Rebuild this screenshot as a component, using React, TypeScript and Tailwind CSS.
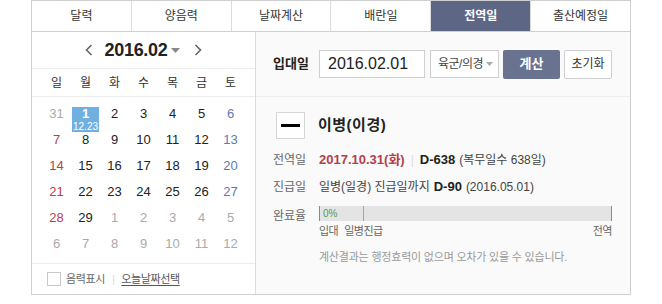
import React from 'react';

const FONT = { fontFamily: '"Liberation Sans", "Noto Sans CJK KR", sans-serif' };

const tabs = ['달력', '양음력', '날짜계산', '배란일', '전역일', '출산예정일'];
const weekdays = ['일', '월', '화', '수', '목', '금', '토'];

type Day = { d: number; muted?: boolean };

const days: Day[] = [
  { d: 31, muted: true },
  ...Array.from({ length: 29 }, (_, i) => ({ d: i + 1 })),
  ...Array.from({ length: 12 }, (_, i) => ({ d: i + 1, muted: true })),
];

function dayColor(i: number, muted?: boolean) {
  if (muted) return 'text-[#aaaaaa]';
  if (i % 7 === 0) return 'text-[#b8404e]';
  if (i % 7 === 6) return 'text-[#5b7bb0]';
  return 'text-[#222222]';
}

function Calendar() {
  return (
    <div className="w-[224px] flex flex-col border-r border-[#dcdcdc] bg-white">
      <div className="h-[37px] flex items-center justify-center border-b border-[#ececec]">
        <svg width="8" height="12" viewBox="0 0 8 12" className="mr-[12px]">
          <path d="M6.5 1 L1.5 6 L6.5 11" stroke="#666" strokeWidth="1.6" fill="none" />
        </svg>
        <span className="text-[18px] font-bold text-[#222] tracking-[-0.3px]">2016.02</span>
        <svg width="9" height="5" viewBox="0 0 9 5" className="ml-[4px] mr-[14px]">
          <path d="M0 0 L9 0 L4.5 5 Z" fill="#888" />
        </svg>
        <svg width="8" height="12" viewBox="0 0 8 12">
          <path d="M1.5 1 L6.5 6 L1.5 11" stroke="#666" strokeWidth="1.6" fill="none" />
        </svg>
      </div>
      <div className="h-[28px] grid grid-cols-7 px-[10px] items-center border-b border-[#ececec] text-[12px] text-[#333]">
        {weekdays.map((w) => (
          <span key={w} className="text-center">{w}</span>
        ))}
      </div>
      <div className="flex-1 grid grid-cols-7 auto-rows-[26px] px-[10px] pt-[10px]">
        {days.map((day, i) =>
          i === 1 ? (
            <div key={i} className="flex justify-center">
              <div className="w-[27px] h-[25px] bg-[#6fb0e0] flex flex-col items-center text-white">
                <span className="text-[13px] leading-[13px] font-bold">1</span>
                <span className="text-[10px] leading-[11px] mt-[1px]">12.23</span>
              </div>
            </div>
          ) : (
            <div key={i} className={`text-center text-[13px] leading-[13px] ${dayColor(i, day.muted)}`}>
              {day.d}
            </div>
          )
        )}
      </div>
      <div className="h-[31px] border-t border-[#ececec] flex items-center pl-[15px] text-[11px] tracking-[-0.4px]">
        <span className="w-[14px] h-[14px] border border-[#c8c8c8] bg-white" />
        <span className="ml-[5px] text-[#666]">음력표시</span>
        <span className="mx-[7px] text-[#dddddd]">|</span>
        <span className="text-[#555] underline underline-offset-2">오늘날짜선택</span>
      </div>
    </div>
  );
}

function Result() {
  return (
    <div className="flex-1 bg-[#fafafa] flex flex-col">
      <div className="h-[65px] flex items-center pl-[17px] border-b border-[#eeeeee]">
        <span className="text-[13px] font-bold text-[#222] w-[46px]">입대일</span>
        <div className="w-[106px] h-[28px] border border-[#cfcfcf] bg-white flex items-center pl-[8px] text-[16px] text-[#222]">
          2016.02.01
        </div>
        <div className="ml-[5px] w-[69px] h-[28px] border border-[#cfcfcf] bg-white flex items-center pl-[7px] text-[12px] text-[#444] tracking-[-0.5px]">
          육군/의경
          <svg width="7" height="4" viewBox="0 0 7 4" className="ml-[3px]">
            <path d="M0 0 L7 0 L3.5 4 Z" fill="#aaa" />
          </svg>
        </div>
        <button className="ml-[4px] w-[57px] h-[29px] rounded-[2px] bg-[#69728f] text-white text-[13px] font-bold">
          계산
        </button>
        <button className="ml-[4px] w-[48px] h-[29px] rounded-[2px] border border-[#cfcfcf] bg-white text-[#333] text-[12px]">
          초기화
        </button>
      </div>
      <div className="pl-[20px] pt-[15px] flex items-center">
        <div className="w-[29px] h-[27px] border border-[#d6d6d6] bg-white flex items-center justify-center">
          <span className="w-[19px] h-[3px] bg-black" />
        </div>
        <span className="ml-[13px] text-[15px] font-bold text-[#222] tracking-[0.5px]">이병(이경)</span>
      </div>
      <div className="pl-[17px] mt-[12px] flex items-center text-[12px] h-[18px]">
        <span className="w-[46px] text-[#666]">전역일</span>
        <span className="text-[13px] font-bold text-[#b3404d]">2017.10.31(화)</span>
        <span className="mx-[6px] text-[#dddddd]">|</span>
        <span className="text-[13px] font-bold text-[#222]">D-638</span>
        <span className="ml-[4px] text-[#444]">(복무일수 638일)</span>
      </div>
      <div className="pl-[17px] mt-[9px] flex items-center text-[12px] h-[18px]">
        <span className="w-[46px] text-[#666]">진급일</span>
        <span className="text-[#444]">일병(일경) 진급일까지</span>
        <span className="ml-[4px] text-[13px] font-bold text-[#222]">D-90</span>
        <span className="ml-[4px] text-[#444]">(2016.05.01)</span>
      </div>
      <div className="pl-[17px] mt-[10px] flex text-[12px]">
        <span className="w-[46px] text-[#666] pt-[1px]">완료율</span>
        <div className="w-[293px]">
          <div className="relative h-[15px] bg-[#e4e4e4] border-l border-[#5aa56a] border-r-[#8a8a8a] border-r">
            <span className="absolute left-[3px] top-[1px] text-[10px] leading-[13px] text-[#4f9a5f]">0%</span>
            <span className="absolute left-[43px] top-0 h-full w-px bg-[#7fbf8c]" />
          </div>
          <div className="flex text-[11px] text-[#666] tracking-[-0.5px] mt-[2px]">
            <span>입대</span>
            <span className="ml-[6px]">일병진급</span>
            <span className="ml-auto">전역</span>
          </div>
        </div>
      </div>
      <div className="mt-[9px] text-center text-[11px] text-[#999] tracking-[-0.2px]">
        계산결과는 행정효력이 없으며 오차가 있을 수 있습니다.
      </div>
    </div>
  );
}

export default function App() {
  return (
    <div className="w-[662px] h-[304px] bg-white" style={FONT}>
      <div className="ml-[31px] w-[600px]">
        <div className="flex h-[32px] border border-[#d0d0d0]">
          {tabs.map((t, i) => (
            <div
              key={t}
              className={`flex-1 flex items-center justify-center text-[12px] ${
                i > 0 ? 'border-l border-[#dcdcdc]' : ''
              } ${i === 4 ? 'bg-[#5e6686] text-white font-bold' : 'bg-white text-[#333]'}`}
            >
              {t}
            </div>
          ))}
        </div>
        <div className="flex h-[263px] border-l border-r border-b border-[#d0d0d0]">
          <Calendar />
          <Result />
        </div>
      </div>
    </div>
  );
}
